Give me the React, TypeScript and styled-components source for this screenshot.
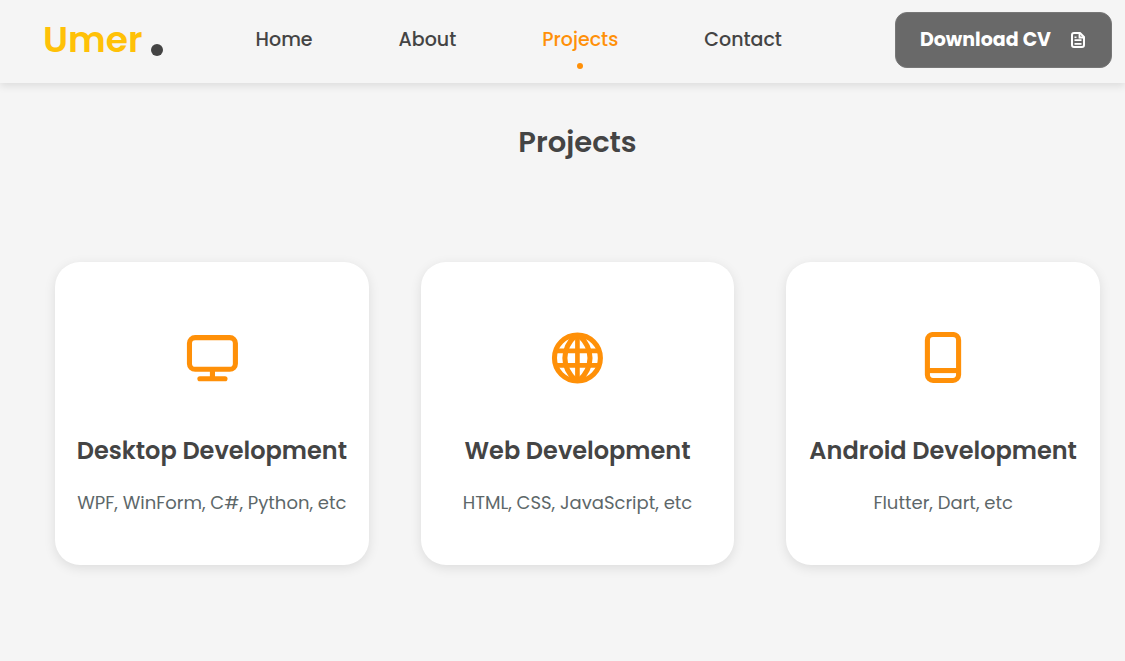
import React from "react";
import styled, { createGlobalStyle } from "styled-components";

const GlobalStyle = createGlobalStyle`
  * { box-sizing: border-box; }
  body {
    margin: 0;
    background: #f5f5f5;
    color: #444;
    font-family: Poppins, Inter, sans-serif;
  }
`;

const Header = styled.header`
  display: flex;
  align-items: center;
  justify-content: space-between;
  height: 83px;
  padding: 0 13px 3px 43px;
  box-shadow: 0 3px 8px rgba(0, 0, 0, 0.1);
`;

const Logo = styled.a`
  display: flex;
  align-items: flex-end;
  gap: 8px;
  color: #ffc107;
  font-size: 36px;
  font-weight: 600;
  line-height: 48px;
  text-decoration: none;
`;

const LogoDot = styled.span`
  width: 12px;
  height: 12px;
  margin-bottom: 8px;
  border-radius: 50%;
  background: #444;
`;

const Nav = styled.nav`
  display: flex;
  gap: 86px;
  margin-right: 20px;
`;

const NavLink = styled.a<{ $active?: boolean }>`
  position: relative;
  color: ${(p) => (p.$active ? "#ff9008" : "#444")};
  font-size: 19px;
  font-weight: 500;
  line-height: 30px;
  text-decoration: none;

  &::after {
    content: "";
    display: ${(p) => (p.$active ? "block" : "none")};
    position: absolute;
    left: 50%;
    bottom: -14px;
    width: 6px;
    height: 6px;
    margin-left: -3px;
    border-radius: 50%;
    background: #ff9008;
  }
`;

const DownloadButton = styled.button`
  display: flex;
  align-items: center;
  gap: 20px;
  height: 56px;
  padding: 0 26px 0 24px;
  border: 1px solid #777;
  border-radius: 12px;
  background: #696969;
  color: #fff;
  font: inherit;
  font-size: 19px;
  font-weight: 700;
  line-height: 30px;
`;

const Section = styled.main`
  padding: 37px 25px 96px 55px;
`;

const Title = styled.h1`
  margin: 0 0 97px;
  font-size: 29px;
  font-weight: 600;
  line-height: 45px;
  text-align: center;
`;

const Cards = styled.div`
  display: grid;
  grid-template-columns: repeat(3, 1fr);
  gap: 52px;
`;

const Card = styled.article`
  display: flex;
  flex-direction: column;
  align-items: center;
  padding: 70px 0 45px;
  border-radius: 25px;
  background: #fff;
  box-shadow: 0 3px 12px rgba(0, 0, 0, 0.1);
  text-align: center;
  white-space: nowrap;
`;

const CardTitle = styled.h2`
  margin: 49px 0 17px;
  font-size: 24px;
  font-weight: 600;
  line-height: 36px;
`;

const CardText = styled.p`
  margin: 0;
  color: #5d6769;
  font-size: 18px;
  line-height: 34px;
`;

const Icon = styled.svg`
  display: block;
  width: 52px;
  height: 52px;
  fill: none;
  stroke: #ff9008;
  stroke-width: 2.35;
`;

const DocumentIcon = () => (
  <svg width="14" height="16" viewBox="0 0 14 16" fill="none" stroke="#fff" strokeWidth="2" aria-hidden="true">
    <path d="M9 1H3Q1 1 1 3V13Q1 15 3 15H11Q13 15 13 13V5Z" strokeLinejoin="round" />
    <path d="M8.5 1V5.5H13" strokeWidth="1.8" />
    <path d="M3.5 8.2H10.5M3.5 11.8H10.5" strokeWidth="1.8" />
    <path d="M3.5 5.3H5.5" strokeWidth="1.5" />
  </svg>
);

const DesktopIcon = () => (
  <Icon viewBox="0 0 24 24" aria-hidden="true">
    <rect x="1.6" y="2.6" width="21.2" height="14.6" rx="2.6" />
    <path d="M12.2 17V22" />
    <path d="M6.4 21.6H18" strokeLinecap="round" />
  </Icon>
);

const GlobeIcon = () => (
  <Icon viewBox="0 0 24 24" aria-hidden="true">
    <circle cx="12.2" cy="12" r="10.6" />
    <path d="M2 8.7H22M2 15.4H22M12.2 1V22.8" strokeWidth="2.15" />
    <path d="M11.7 1.3C8.2 4.4 6.4 8 6.4 12S8.2 19.6 11.7 22.7M12.7 1.3C16.2 4.4 18 8 18 12S16.2 19.6 12.7 22.7" />
  </Icon>
);

const PhoneIcon = () => (
  <Icon viewBox="0 0 24 24" aria-hidden="true">
    <rect x="4.8" y="1.15" width="14.4" height="21.2" rx="2.6" />
    <path d="M4.8 17.8H19.2" />
  </Icon>
);

const links = ["Home", "About", "Projects", "Contact"];

const projects = [
  { title: "Desktop Development", text: "WPF, WinForm, C#, Python, etc", Graphic: DesktopIcon },
  { title: "Web Development", text: "HTML, CSS, JavaScript, etc", Graphic: GlobeIcon },
  { title: "Android Development", text: "Flutter, Dart, etc", Graphic: PhoneIcon },
];

export default function App() {
  return (
    <>
      <GlobalStyle />
      <Header>
        <Logo href="#home">
          Umer
          <LogoDot />
        </Logo>
        <Nav>
          {links.map((name) => (
            <NavLink key={name} href={`#${name.toLowerCase()}`} $active={name === "Projects"}>
              {name}
            </NavLink>
          ))}
        </Nav>
        <DownloadButton type="button">
          Download CV
          <DocumentIcon />
        </DownloadButton>
      </Header>
      <Section id="projects">
        <Title>Projects</Title>
        <Cards>
          {projects.map(({ title, text, Graphic }) => (
            <Card key={title}>
              <Graphic />
              <CardTitle>{title}</CardTitle>
              <CardText>{text}</CardText>
            </Card>
          ))}
        </Cards>
      </Section>
    </>
  );
}
